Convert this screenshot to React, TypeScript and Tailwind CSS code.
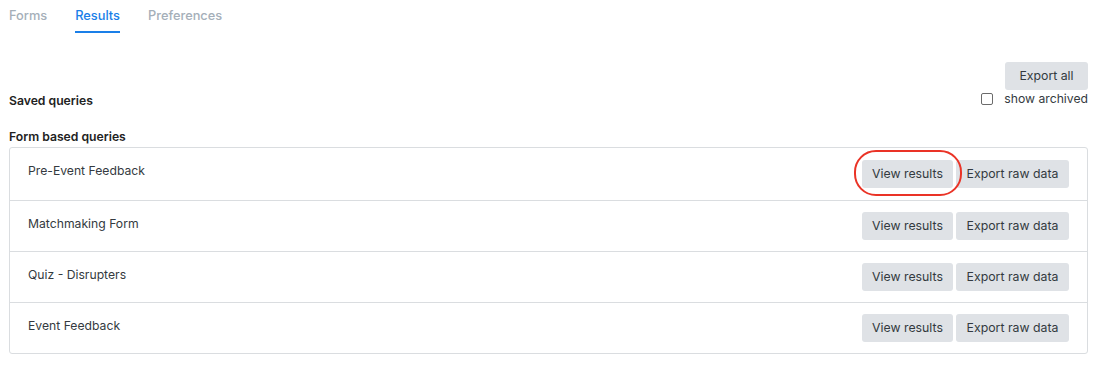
import React from 'react';

const forms = ['Pre-Event Feedback', 'Matchmaking Form', 'Quiz - Disrupters', 'Event Feedback'];

const tabs = [
  { label: 'Forms', active: false },
  { label: 'Results', active: true },
  { label: 'Preferences', active: false },
];

function Btn({ children, className = '' }: { children: React.ReactNode; className?: string }) {
  return (
    <button
      className={`h-[28px] px-0 bg-[#dfe2e6] text-[#333a40] text-[12.3px] rounded-[3px] leading-none ${className}`}
    >
      {children}
    </button>
  );
}

export default function App() {
  return (
    <div className="w-[1105px] h-[366px] bg-white text-[12.2px] text-[#343a40] font-['Inter','Liberation_Sans',sans-serif]">
      {/* Tabs */}
      <div className="flex gap-[28px] pl-[9px] h-[33px]">
        {tabs.map(tab => (
          <div
            key={tab.label}
            className={`pt-[6px] text-[12.8px] font-medium border-b-2 ${
              tab.active ? 'text-[#1a7fe8] border-[#1a7fe8]' : 'text-[#a5afb9] border-transparent'
            }`}
          >
            {tab.label}
          </div>
        ))}
      </div>

      <div className="pl-[9px] pr-[17px]">
        {/* Header */}
        <div className="flex justify-between items-end mt-[29px]">
          <div className="font-semibold text-[#222] mb-[-4px]">Saved queries</div>
          <div className="flex flex-col items-end">
            <Btn className="w-[83px] h-[27px]">Export all</Btn>
            <label className="flex items-center gap-[11px] mt-[2px] h-[14px]">
              <span className="w-[12px] h-[12px] border border-[#6b6b6b] rounded-[2px] bg-white" />
              <span>show archived</span>
            </label>
          </div>
        </div>

        <div className="font-semibold text-[#222] mt-[22px]">Form based queries</div>

        {/* List */}
        <div className="mt-[1px] border border-[#dadde0] rounded-[3px]">
          {forms.map((name, i) => (
            <div
              key={name}
              className={`flex justify-between items-center h-[51.25px] pl-[18px] pr-[18px] ${
                i > 0 ? 'border-t border-[#dadde0]' : ''
              }`}
            >
              <span className="self-start pt-[14px]">{name}</span>
              <div className="relative flex gap-[3px]">
                <Btn className={`w-[91px] ${i === 0 ? 'bg-[#cfd4d9]' : ''}`}>View results</Btn>
                <Btn className="w-[113px]">Export raw data</Btn>
                {i === 0 && (
                  <span className="absolute left-[-8px] top-[-10px] w-[108px] h-[46px] border-2 border-[#ea3326] rounded-[22px] pointer-events-none" />
                )}
              </div>
            </div>
          ))}
        </div>
      </div>
    </div>
  );
}
